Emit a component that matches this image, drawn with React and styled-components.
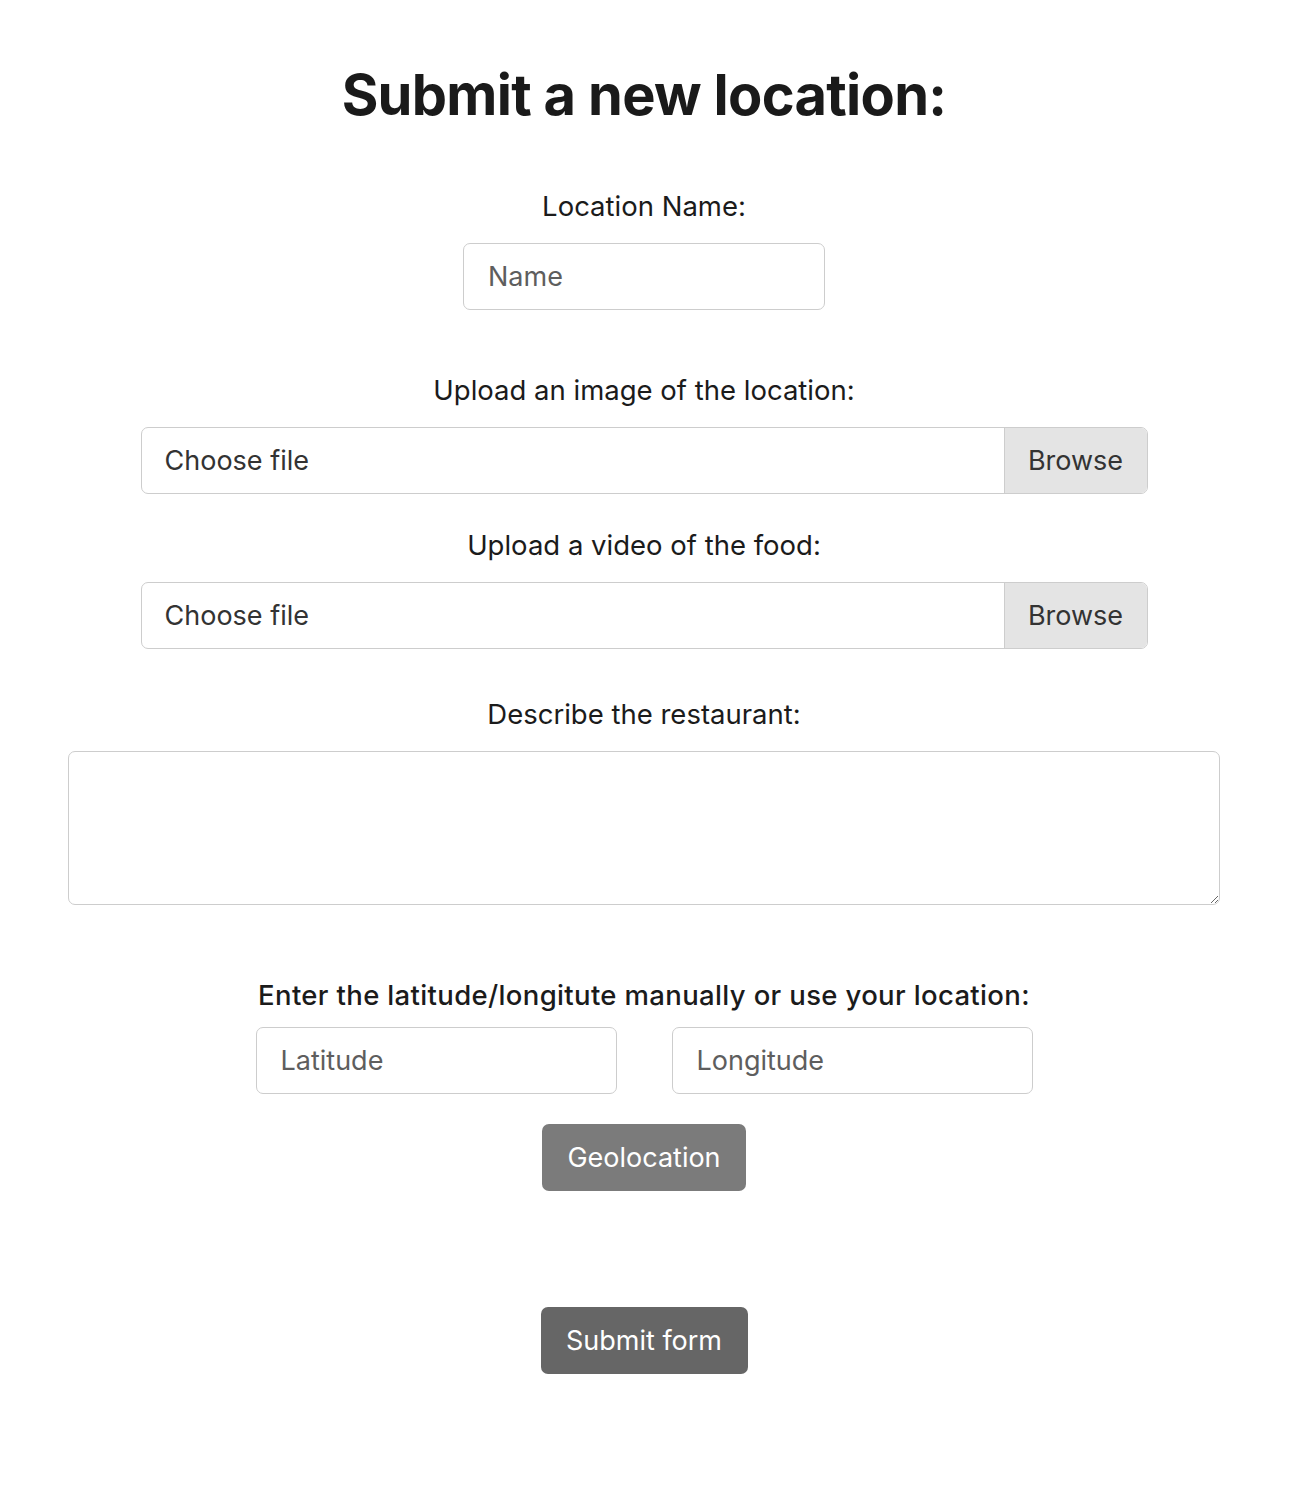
import React from "react";
import styled, { createGlobalStyle } from "styled-components";

const GlobalStyle = createGlobalStyle`
  html, body {
    margin: 0;
    padding: 0;
    background: #fff;
  }
  body {
    font-family: Inter, "Liberation Sans", sans-serif;
    color: #1b1b1b;
  }
`;

const App = () => {
  return (
    <>
      <GlobalStyle />
      <Page>
        <Title>Submit a new location:</Title>
        <Form>
          <Section $top={56}>
            <Label>Location Name:</Label>
            <TextInput $width={362} placeholder="Name" />
          </Section>

          <Section $top={60}>
            <Label>Upload an image of the location:</Label>
            <FileBox>
              <FileText>Choose file</FileText>
              <Browse>Browse</Browse>
            </FileBox>
          </Section>

          <Section $top={31}>
            <Label>Upload a video of the food:</Label>
            <FileBox>
              <FileText>Choose file</FileText>
              <Browse>Browse</Browse>
            </FileBox>
          </Section>

          <Section $top={45}>
            <Label>Describe the restaurant:</Label>
            <TextArea />
          </Section>

          <Section $top={70}>
            <Label $strong $gap={12}>
              Enter the latitude/longitute manually or use your location:
            </Label>
            <CoordRow>
              <TextInput $width={361} placeholder="Latitude" />
              <TextInput $width={361} placeholder="Longitude" />
            </CoordRow>
            <Button $top={30} $bg="#7b7b7b" $width={204}>
              Geolocation
            </Button>
          </Section>

          <Button $top={116} $bg="#666666" $width={207}>
            Submit form
          </Button>
        </Form>
      </Page>
    </>
  );
};

export default App;

const Page = styled.div`
  width: 1288px;
  min-height: 1486px;
  padding-top: 60px;
  box-sizing: border-box;
  display: flex;
  flex-direction: column;
  align-items: center;
`;

const Title = styled.h1`
  margin: 0;
  font-size: 56px;
  line-height: 70px;
  font-weight: 700;
  letter-spacing: -0.7px;
  color: #1a1a1a;
`;

const Form = styled.form`
  display: flex;
  flex-direction: column;
  align-items: center;
  width: 100%;
`;

const Section = styled.div`
  margin-top: ${(p) => p.$top}px;
  display: flex;
  flex-direction: column;
  align-items: center;
`;

const Label = styled.label`
  font-size: 27.5px;
  line-height: 40px;
  font-weight: ${(p) => (p.$strong ? 500 : 400)};
  letter-spacing: ${(p) => (p.$strong ? "0.35px" : "0")};
  margin-bottom: ${(p) => p.$gap ?? 17}px;
  color: #1b1b1b;
`;

const TextInput = styled.input`
  width: ${(p) => p.$width}px;
  height: 67px;
  box-sizing: border-box;
  border: 1.5px solid #cdcdcd;
  border-radius: 7px;
  padding: 0 24px;
  font-family: Inter, "Liberation Sans", sans-serif;
  font-size: 27px;
  color: #333;
  outline: none;
  &::placeholder {
    color: #5e5e5e;
  }
`;

const FileBox = styled.div`
  width: 1007px;
  height: 67px;
  box-sizing: border-box;
  border: 1.5px solid #cdcdcd;
  border-radius: 7px;
  display: flex;
  align-items: stretch;
  overflow: hidden;
`;

const FileText = styled.span`
  flex: 1;
  display: flex;
  align-items: center;
  padding-left: 23px;
  font-size: 27px;
  color: #333;
`;

const Browse = styled.span`
  width: 142px;
  display: flex;
  align-items: center;
  justify-content: center;
  background: #e4e4e4;
  border-left: 1.5px solid #cdcdcd;
  font-size: 27px;
  color: #333;
`;

const TextArea = styled.textarea`
  width: 1152px;
  height: 154px;
  box-sizing: border-box;
  border: 1.5px solid #cdcdcd;
  border-radius: 7px;
  padding: 10px 20px;
  font-family: Inter, "Liberation Sans", sans-serif;
  font-size: 27px;
  outline: none;
`;

const CoordRow = styled.div`
  display: flex;
  gap: 55px;
`;

const Button = styled.button`
  margin-top: ${(p) => p.$top}px;
  width: ${(p) => p.$width}px;
  height: 67px;
  border: none;
  border-radius: 7px;
  background: ${(p) => p.$bg};
  color: #fff;
  font-family: Inter, "Liberation Sans", sans-serif;
  font-size: 27px;
  cursor: pointer;
`;
